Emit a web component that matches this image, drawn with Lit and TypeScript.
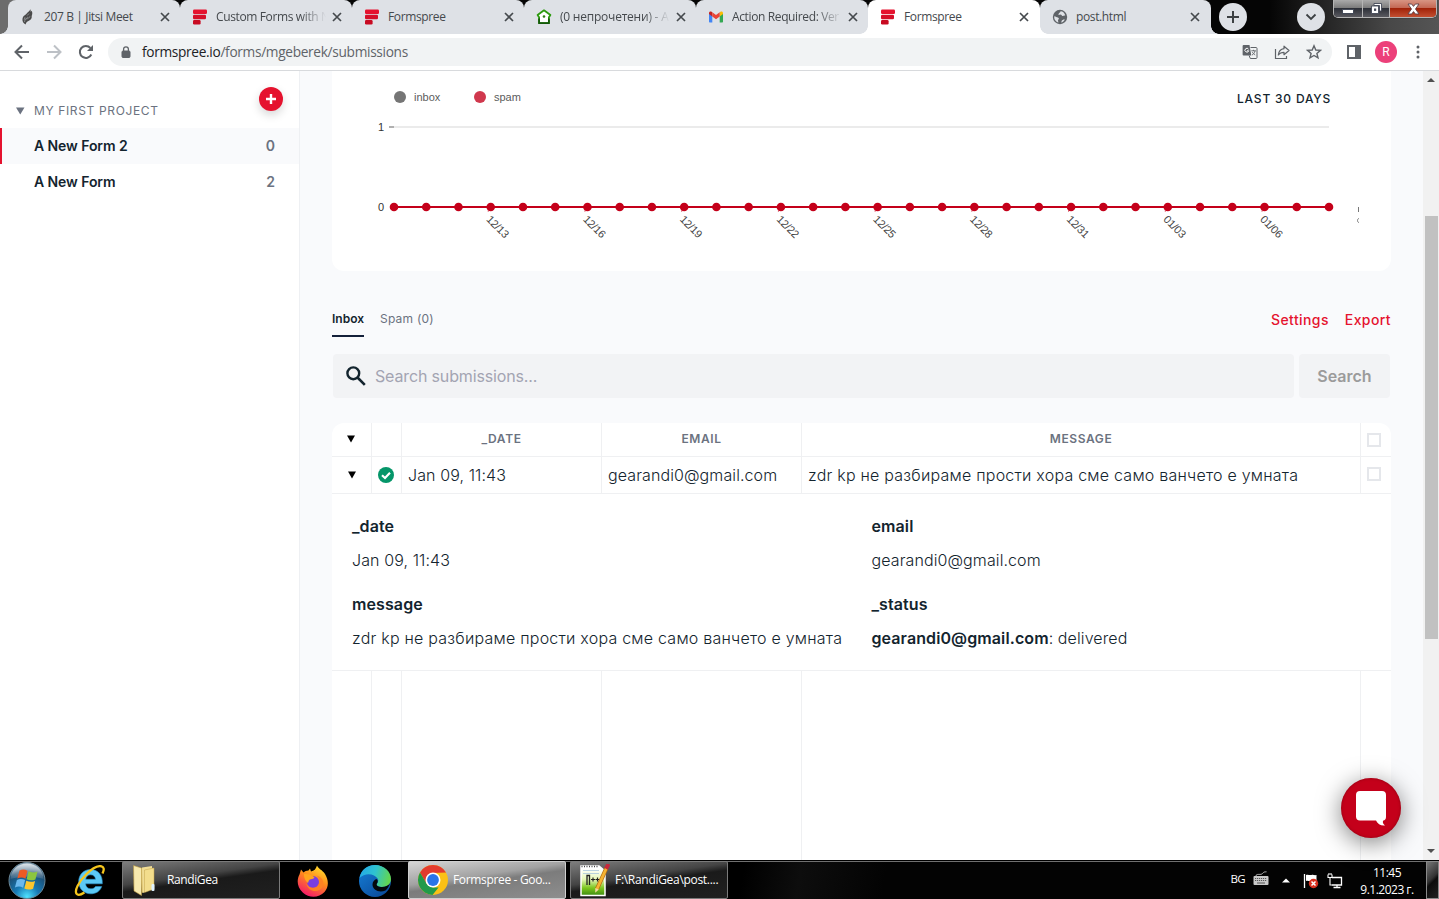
import { LitElement, html, css, svg } from "lit";
import { customElement } from "lit/decorators.js";
import { classMap } from "lit/directives/class-map.js";

const formspreeIcon = html`<svg width="16" height="16" viewBox="0 0 16 16">
  <rect x="1" y="0.5" width="14" height="4.4" rx="1.2" fill="#e5122e" />
  <rect x="1" y="5.8" width="13" height="4.4" rx="1.2" fill="#d50f29" />
  <rect x="1" y="11" width="7.6" height="4.4" rx="1.2" fill="#c80b22" />
</svg>`;

const jitsiIcon = html`<svg width="16" height="16" viewBox="0 0 16 16">
  <path d="M10.200 .3c.6 1 .7 1.700.3 2.500.7-.2 1-.6 1.200-1 1 2.200.6 3.800 0 5.200.5 2.400-1.200 4.300-3.700 5.200-1.400.6-2 1.700-2.400 3.200l-1.400-.9c-1.900-1.600-2.200-4.500-1.200-6.600C3.800 6.200 5.700 6 6.500 4.700c.8-1.400 3.200-2.100 3.700-4.400z" fill="#4a4a4a" />
  <path d="M4.500 13c.3-2.600 1.800-3.800 3.400-5M6.200 10c2-.3 3.200-1.300 3.700-2.700M7.200 6.500l1.800-2M5 8.200l-.8 2.600" stroke="#a5a7ab" stroke-width=".7" fill="none" />
</svg>`;

const houseIcon = html`<svg width="16" height="16" viewBox="0 0 16 16">
  <path d="M8 1.300 14.400 6 12.900 8.200V14.200H3.100V8.200L1.600 6z" fill="#fff" stroke="#2b9a0d" stroke-width="1.800" stroke-linejoin="round" />
  <path d="M3.100 9.500v4.700h9.800V9.500" fill="none" stroke="#15590a" stroke-width="1.800" stroke-linejoin="round" />
  <circle cx="8" cy="7.500" r="1.300" fill="#2d7d12" />
</svg>`;

const gmailIcon = html`<svg width="16" height="16" viewBox="0 0 16 16">
  <path d="M1 4v8.500c0 .6.400 1 1 1h2.300V6.600z" fill="#4285f4" />
  <path d="M15 4v8.500c0 .6-.4 1-1 1h-2.300V6.600z" fill="#34a853" />
  <path d="M11.700 3.600v3.800L15 4.900V4c0-1.500-1.600-2-2.600-1.200z" fill="#fbbc04" />
  <path d="M4.300 3.600v3.800L1 4.900V4c0-1.500 1.600-2 2.600-1.200z" fill="#c5221f" />
  <path d="M4.300 7.400V3.300L8 6.100l3.700-2.800v4.100L8 10.200z" fill="#ea4335" />
</svg>`;

const globeIcon = html`<svg width="16" height="16" viewBox="0 0 16 16">
  <circle cx="8" cy="8" r="7.200" fill="#5f6368" />
  <path d="M2.300 7.200c1.600.3 2.400 1 3.600 1.200 1.300.3 1.200 1.600.4 2.200-.5.500-.2 1.700.2 2.800-2.600-.5-4.700-3.200-4.200-6.200zM8.300 2.200c.6.500-.2 1.200-.9 1.600-.8.500-.5 1.300-1.200 1.600.6.800 1.500.3 2.400.2.900 0 .9 1 1.700 1.300.9.200 1.500-.6 2.900-.4-.3-2.200-2.300-4.400-4.900-4.300zM9.200 13.600c1.500-.3 3-1.500 3.700-3.100-1.400-.4-2.600.300-3.200 1.300z" fill="#dee1e6" />
</svg>`;

interface Tab { title: string; icon: unknown; active?: boolean; fade?: boolean; cls?: string }

const TABS: Tab[] = [
  { title: "207 B | Jitsi Meet", icon: jitsiIcon, cls: "first" },
  { title: "Custom Forms with N", icon: formspreeIcon, fade: true },
  { title: "Formspree", icon: formspreeIcon },
  { title: "(0 непрочетени) - А", icon: houseIcon, fade: true, cls: "cyr" },
  { title: "Action Required: Ver", icon: gmailIcon, fade: true },
  { title: "Formspree", icon: formspreeIcon, active: true },
  { title: "post.html", icon: globeIcon, cls: "last" },
];

@customElement("browser-tabs")
class BrowserTabs extends LitElement {
  static styles = css`
    :host { display: flex; height: 34px; background: linear-gradient(90deg, #6c6c6c 0, #6c6c6c 10px, #050505 60px, #050505 1270px, #1c1c1c 1310px, #484848 1390px, #555 1439px); padding-left: 8px; font-family: "Open Sans", "Noto Sans", sans-serif; font-size: 12px; color: #45494d; }
    .tab { width: 172px; height: 34px; box-sizing: border-box; display: flex; align-items: center; background: #dee1e6; border-radius: 8px 8px 0 0; padding-left: 12px; position: relative; }
    .tab.sep::after { content: ""; position: absolute; right: -1px; top: 7px; width: 1px; height: 20px; background: #85888d; }
    .tab.active { background: #fff; }
    .tab.active::before, .tab.active::after, .tab.first::before, .tab.last::after { content: ""; position: absolute; bottom: 0; width: 8px; height: 8px; z-index: 1; }
    .tab.active::before { left: -8px; background: radial-gradient(circle at 0 0, transparent 7.500px, #fff 8px); }
    .tab.active::after { right: -8px; background: radial-gradient(circle at 100% 0, transparent 7.500px, #fff 8px); }
    .tab.first::before { left: -8px; background: radial-gradient(circle at 0 0, transparent 7.500px, #dee1e6 8px); }
    .tab.last { width: 171px; }
    .tab.last::after { right: -8px; background: radial-gradient(circle at 100% 0, transparent 7.500px, #dee1e6 8px); }
    .icon { display: flex; width: 16px; margin-right: 8px; }
    .title { width: 116px; white-space: nowrap; letter-spacing: -0.37px; line-height: 18px; margin-bottom: 1px; }
    .cyr .title { letter-spacing: -0.22px; }
    .title.fade { -webkit-mask-image: linear-gradient(90deg, #000 84px, transparent 110px); mask-image: linear-gradient(90deg, #000 84px, transparent 110px); }
    .x { display: flex; }
    .active .x { margin-left: -1px; }
    .last .x { margin-left: -2px; }
    .round { width: 28px; height: 28px; border-radius: 50%; background: #dee1e6; margin: 3px 0 0 8px; display: flex; align-items: center; justify-content: center; }
    .round.down { margin-left: 50px; }
    .spring { flex: 1; }
    .controls { display: flex; height: 17px; width: 102px; margin-right: 2px; border: 1px solid #b5b5b5; border-top: 0; border-radius: 0 0 5px 5px; overflow: hidden; box-shadow: 0 0 1px #000; }
    .ctl { width: 28px; display: flex; align-items: center; justify-content: center; border-right: 1px solid #b5b5b5; background: linear-gradient(#aaa 0, #7d7d7d 45%, #2d3038 50%, #5a5a60 100%); }
    .ctl.mid { width: 26px; }
    .ctl.close { flex: 1; border: 0; background: linear-gradient(#d89583 0, #c46955 45%, #a12309 50%, #c34f31 100%); }
    .ctl:first-child svg { margin-top: 4px; }
  `;
  render() {
    return html`${TABS.map((t, i) => html`
      <div class=${classMap({ tab: true, active: !!t.active, sep: i < 4, [t.cls ?? "plain"]: true })}>
        <span class="icon">${t.icon}</span>
        <span class=${classMap({ title: true, fade: !!t.fade })}>${t.title}</span>
        <span class="x"><svg width="10" height="10" viewBox="0 0 10 10"><path d="M1 1l8 8M9 1l-8 8" stroke="#45494d" stroke-width="1.700" /></svg></span>
      </div>`)}
      <div class="round"><svg width="14" height="14" viewBox="0 0 14 14"><path d="M7 1v12M1 7h12" stroke="#3c4043" stroke-width="2" /></svg></div>
      <div class="round down"><svg width="12" height="8" viewBox="0 0 12 8"><path d="M1.500 1.500 6 6l4.500-4.500" fill="none" stroke="#3c4043" stroke-width="1.800" /></svg></div>
      <div class="spring"></div>
      <div class="controls">
        <span class="ctl"><svg width="12" height="6" viewBox="0 0 12 6"><rect x=".5" y="1.500" width="11" height="4" fill="#fff" stroke="#444a58" /></svg></span>
        <span class="ctl mid"><svg width="13" height="13" viewBox="0 0 13 13"><path d="M4 1.500h7.500V9H9.500V3.500H4zM1.500 4h7v7.500h-7z" fill="#fff" stroke="#444a58" stroke-width=".9" /><rect x="4" y="6.500" width="2.200" height="2.400" fill="#444a58" /></svg></span>
        <span class="ctl close"><svg width="13" height="12" viewBox="0 0 13 12"><path d="M1 1h3.600l1.900 2.400L8.400 1H12L8.500 6 12 11H8.400L6.500 8.600 4.600 11H1l3.500-5z" fill="#fff" stroke="#5a4248" stroke-width=".9" /></svg></span>
      </div>`;
  }
}

@customElement("browser-toolbar")
class BrowserToolbar extends LitElement {
  static styles = css`
    :host { display: flex; align-items: center; height: 36px; background: #fff; border-bottom: 1px solid #d8dadd; padding-left: 14px; box-sizing: content-box; font-family: "Open Sans", "Noto Sans", sans-serif; }
    svg { display: block; flex: none; }
    .nav { display: flex; gap: 16px; }
    .omni { display: flex; align-items: center; width: 1224px; height: 28px; box-sizing: border-box; border-radius: 14px; background: #f1f3f4; margin-left: 14px; padding: 0 10px 0 13px; }
    .url { flex: 1; margin-left: 11px; font-size: 13.700px; letter-spacing: -0.32px; color: #5f6368; white-space: nowrap; line-height: 20px; }
    .host { color: #202124; }
    .acts { display: flex; gap: 16px; align-items: center; }
    .right { display: flex; align-items: center; margin-left: 14px; }
    .avatar { width: 22px; height: 22px; border-radius: 50%; background: #ec407a; color: #fff; font: 12px/22px Roboto, sans-serif; text-align: center; margin: 0 19px 0 13px; }
  `;
  render() {
    return html`
      <div class="nav">
        <svg width="16" height="16" viewBox="0 0 16 16"><path d="M15 8H2.500M8 1.500 1.500 8 8 14.500" fill="none" stroke="#5f6368" stroke-width="2" /></svg>
        <svg width="16" height="16" viewBox="0 0 16 16"><path d="M1 8h12.500M8 1.500 14.500 8 8 14.500" fill="none" stroke="#bdc1c6" stroke-width="2" /></svg>
        <svg width="16" height="16" viewBox="0 0 16 16"><path d="M13.300 10.500A6 6 0 1 1 12.400 4" fill="none" stroke="#5f6368" stroke-width="2" /><path d="M15 1v6H9z" fill="#5f6368" /></svg>
      </div>
      <div class="omni">
        <svg width="10" height="13" viewBox="0 0 10 13"><rect x="1" y="5" width="8" height="6.500" rx="1" fill="#5f6368" stroke="#5f6368" /><path d="M2.600 5V3.200a2.400 2.400 0 0 1 4.800 0V5" fill="none" stroke="#5f6368" stroke-width="1.300" /></svg>
        <div class="url"><span class="host">formspree.io</span>/forms/mgeberek/submissions</div>
        <div class="acts">
          <svg width="16" height="16" viewBox="0 0 16 16"><path d="M1.500 1h6l1.800 10.500H1.500c-.5 0-.9-.4-.9-.9V1.900c0-.5.400-.9.900-.9z" fill="#5f6368" /><path d="M8.500 3.500h5.600c.5 0 .9.400.9.900v9.200c0 .5-.4.900-.9.900H8.300l-1.200-3" fill="none" stroke="#5f6368" /><path d="M6.500 5.200A1.900 1.900 0 1 0 6.700 6.800H5" fill="none" stroke="#fff" /><path d="M9.300 6.800h4.600M11.500 5.800v1M13 7c-.4 2-1.700 3.400-3 4M10.400 8c.4 1.200 1.500 2.300 2.800 3" fill="none" stroke="#5f6368" stroke-width=".9" /></svg>
          <svg width="16" height="16" viewBox="0 0 16 16"><path d="M1.500 5v9.500h11V12" fill="none" stroke="#5f6368" stroke-width="1.200" /><path d="M10 2.200 15 6.500l-5 4.200V8.300c-2.600 0-4.300.7-5.700 2.700.4-3.200 2.100-5.800 5.700-6.300z" fill="none" stroke="#5f6368" stroke-width="1.200" stroke-linejoin="round" /></svg>
          <svg width="16" height="16" viewBox="0 0 16 16"><path d="M8 1.800 9.800 6l4.600.4-3.500 3 1.100 4.500L8 11.500l-4 2.400 1.100-4.500-3.500-3L6.200 6z" fill="none" stroke="#5f6368" stroke-width="1.400" /></svg>
        </div>
      </div>
      <div class="right">
        <svg width="16" height="16" viewBox="0 0 16 16"><path d="M1 1h14v14H1z" fill="#5f6368" /><path d="M3 3h6v10H3z" fill="#fff" /></svg>
        <div class="avatar">R</div>
        <svg width="4" height="14" viewBox="0 0 4 14"><circle cx="2" cy="2" r="1.500" fill="#5f6368" /><circle cx="2" cy="7" r="1.500" fill="#5f6368" /><circle cx="2" cy="12" r="1.500" fill="#5f6368" /></svg>
      </div>`;
  }
}

@customElement("project-sidebar")
class ProjectSidebar extends LitElement {
  static styles = css`
    :host { display: block; width: 299px; flex: none; background: #fff; border-right: 1px solid #eef0f3; font-family: Inter, sans-serif; }
    .head { display: flex; height: 57px; box-sizing: border-box; padding: 16px 16px 0 16px; }
    .tri { margin: 20px 9px 0 0; width: 9px; height: 8px; }
    .name { flex: 1; font-size: 12px; letter-spacing: 0.64px; line-height: 16px; color: #6b7280; margin-top: 16px; }
    .add { width: 24px; height: 24px; border-radius: 50%; background: #e5122e; display: flex; align-items: center; justify-content: center; box-shadow: 0 4px 10px rgba(0, 0, 0, .16); }
    .item { display: flex; justify-content: space-between; align-items: center; height: 36px; box-sizing: border-box; padding: 0 24px 1px 32px; border-left: 2px solid transparent; font-size: 14px; font-weight: 600; letter-spacing: -0.08px; color: #13242e; }
    .item.on { background: #f9fafc; border-color: #e5122e; }
    .n { color: #6b7280; }
  `;
  render() {
    return html`
      <div class="head">
        <svg class="tri" viewBox="0 0 9 8"><path d="M0 0.500h8.500L4.250 7.500z" fill="#6b7280" /></svg>
        <span class="name">MY FIRST PROJECT</span>
        <span class="add"><svg width="10" height="10" viewBox="0 0 10 10"><path d="M5 0v10M0 5h10" stroke="#fff" stroke-width="2.400" /></svg></span>
      </div>
      <div class="item on"><span>A New Form 2</span><span class="n">0</span></div>
      <div class="item"><span>A New Form</span><span class="n">2</span></div>`;
  }
}

const X0 = 62, X1 = 997, STEP = (X1 - X0) / 29;
const DATES = ["12/13", "12/16", "12/19", "12/22", "12/25", "12/28", "12/31", "01/03", "01/06"];

@customElement("submissions-chart")
class SubmissionsChart extends LitElement {
  static styles = css`
    :host { display: block; height: 200px; background: #fff; border-radius: 0 0 12px 12px; flex: none; }
    svg { display: block; }
    .lab { font: 11px "Liberation Sans", sans-serif; fill: #5c5c5c; }
    .day { letter-spacing: -0.25px; fill: #444; }
    .ax { font: 11px "Liberation Sans", sans-serif; fill: #333; }
    .range { font: 500 12px Inter, sans-serif; letter-spacing: 0.8px; fill: #13242e; }
  `;
  render() {
    const pts = Array.from({ length: 30 }, (_, i) => X0 + i * STEP);
    return html`<svg width="1059" height="199" viewBox="0 0 1059 199">
      <circle cx="68" cy="26" r="6" fill="#757575" /><text class="lab" x="82" y="30">inbox</text>
      <circle cx="148" cy="26" r="6" fill="#d0384d" /><text class="lab" x="162" y="30">spam</text>
      <text class="range" x="905" y="32">LAST 30 DAYS</text>
      <text class="ax" x="46" y="60">1</text><text class="ax" x="46" y="140">0</text>
      <path d="M62 56H997" stroke="#ebebeb" stroke-width="2" /><path d="M57 56h5" stroke="#b0b0b0" stroke-width="2" />
      <path d="M62 136H997" stroke="#c4001a" stroke-width="2" />
      ${pts.map((x) => svg`<circle cx=${x} cy="136" r="4.300" fill="#c4001a" />`)}
      ${DATES.map((d, i) => {
        const x = X0 + (i + 1) * 3 * STEP;
        return svg`<path d="M${x - 2.5} 136v5" stroke="#c4001a" stroke-width="1" opacity=".5" /><text class="lab day" transform="translate(${x - 5} 149) rotate(45)">${d}</text>`;
      })}
      <path d="M1026.500 136v5" stroke="#777" /><path d="M1027 147.500c-2 0-2 4 0 4" stroke="#777" fill="none" />
    </svg>`;
  }
}

@customElement("submissions-table")
class SubmissionsTable extends LitElement {
  static styles = css`
    :host { display: flex; flex-direction: column; flex: 1; background: #fff; border-radius: 12px 12px 0 0; font-family: Inter, sans-serif; color: #13242e; overflow: hidden; }
    .row { display: grid; grid-template-columns: 40px 30px 200px 200px 559px 30px; }
    .row > * { border-right: 1px solid #eff0f2; display: flex; align-items: center; min-width: 0; box-sizing: border-box; white-space: nowrap; }
    .row > :last-child { border-right: 0; padding-left: 6px; }
    .th { height: 33px; border-bottom: 1px solid #eff0f2; }
    .th > * { justify-content: center; font-size: 12px; font-weight: 600; letter-spacing: 0.6px; color: #6b7280; padding-bottom: 2px; }
    .th > :last-child { justify-content: flex-start; padding-bottom: 0; }
    .th > :first-child { padding-bottom: 2px; padding-right: 1px; }
    .td { height: 36px; border-bottom: 1px solid #eff0f2; }
    .td > .t { padding-left: 6px; font-size: 16px; font-weight: 300; letter-spacing: 0.1px; }
    .td > .t.msg, .v.msg { letter-spacing: 0.23px; }
    .td > .c { justify-content: center; }
    .td > .ok { padding-right: 1px; }
    .box { width: 14px; height: 14px; box-sizing: border-box; border: 2px solid #e5e7eb; }
    .th .box { margin-top: 0; }
    .td .box { margin-bottom: 2px; }
    .detail { height: 177px; box-sizing: border-box; border-bottom: 1px solid #eff0f2; padding: 20px 20px 0; display: grid; grid-template-columns: 519.500px 1fr; grid-auto-rows: 78px; font-size: 16px; line-height: 24px; letter-spacing: 0.1px; }
    .k { font-weight: 600; }
    .v { font-weight: 300; margin-top: 10px; white-space: nowrap; }
    b { font-weight: 600; }
    .empty { flex: 1; }
    svg { display: block; }
  `;
  render() {
    const tri = html`<svg width="8" height="8" viewBox="0 0 8 8"><path d="M0 0.500h8L4 7.500z" fill="#000" /></svg>`;
    const msg = "zdr kp не разбираме прости хора сме само ванчето е умната";
    return html`
      <div class="row th"><span>${tri}</span><span></span><span>_DATE</span><span>EMAIL</span><span>MESSAGE</span><span><i class="box"></i></span></div>
      <div class="row td">
        <span class="c">${tri}</span>
        <span class="c ok"><svg width="16" height="16" viewBox="0 0 16 16"><circle cx="8" cy="8" r="8" fill="#059669" /><path d="M4 8.200 7 11l5-5.200" fill="none" stroke="#fff" stroke-width="2.200" /></svg></span>
        <span class="t">Jan 09, 11:43</span><span class="t">gearandi0@gmail.com</span><span class="t msg">${msg}</span><span><i class="box"></i></span>
      </div>
      <div class="detail">
        <div><div class="k">_date</div><div class="v">Jan 09, 11:43</div></div>
        <div><div class="k">email</div><div class="v">gearandi0@gmail.com</div></div>
        <div><div class="k">message</div><div class="v msg">${msg}</div></div>
        <div><div class="k">_status</div><div class="v"><b>gearandi0@gmail.com</b>: delivered</div></div>
      </div>
      <div class="row empty"><span></span><span></span><span></span><span></span><span></span><span></span></div>`;
  }
}

@customElement("form-page")
class FormPage extends LitElement {
  static styles = css`
    :host { display: flex; flex-direction: column; flex: 1; min-width: 0; min-height: 0; background: #f9fafc; padding: 0 32px; font-family: Inter, sans-serif; overflow: hidden; }
    .tabs { display: flex; height: 26px; margin-top: 40px; font-size: 12px; line-height: 16px; }
    .tab { color: #6b7280; letter-spacing: 0.22px; margin-left: 16px; }
    .tab.on { margin-left: 0; width: 32px; letter-spacing: 0; font-weight: 600; color: #13242e; box-sizing: border-box; border-bottom: 2px solid #14213a; }
    .links { margin-left: auto; display: flex; gap: 16px; font-size: 14px; font-weight: 500; letter-spacing: 0.4px; color: #e5122e; line-height: 18px; }
    .search { display: flex; gap: 5px; margin: 17px 1px 25px 1px; height: 44px; }
    .field { flex: 1; display: flex; align-items: center; background: #f2f3f5; border-radius: 4px; padding-left: 13px; gap: 9px; font-size: 16px; letter-spacing: -0.15px; color: #a3a4b2; }
    .btn { width: 91px; background: #f2f3f5; border-radius: 4px; display: flex; align-items: center; justify-content: center; font-size: 16px; font-weight: 600; color: #9b9b9b; }
  `;
  render() {
    return html`
      <submissions-chart></submissions-chart>
      <div class="tabs"><span class="tab on">Inbox</span><span class="tab">Spam (0)</span>
        <div class="links"><span>Settings</span><span>Export</span></div></div>
      <div class="search">
        <div class="field"><svg width="20" height="20" viewBox="0 0 20 20"><circle cx="7.300" cy="7.300" r="5.900" fill="none" stroke="#13242e" stroke-width="2.400" /><path d="M11.500 11.500l7.300 7.300" stroke="#13242e" stroke-width="2.600" /></svg><span>Search submissions...</span></div>
        <div class="btn">Search</div>
      </div>
      <submissions-table></submissions-table>`;
  }
}

@customElement("win-taskbar")
class WinTaskbar extends LitElement {
  static styles = css`
    :host { display: flex; height: 39px; box-sizing: border-box; border-top: 1px solid #000; background: #060606; font-family: "Open Sans", "Noto Sans", sans-serif; font-size: 12px; color: #fff; }
    .bar { flex: 1; display: flex; align-items: center; border-top: 1px solid #707070; background: linear-gradient(100deg, #000 0, #000 52%, #0d0d0d 56%, #030303 62%, #030303 100%); }
    svg { display: block; flex: none; }
    .start { margin-left: 8px; }
    .ie { margin-left: 28px; }
    .task { height: 38px; margin-top: -1px; width: 158px; box-sizing: border-box; border: 1px solid #7a7a7a; border-radius: 2px; display: flex; align-items: center; padding-left: 10px; white-space: nowrap; letter-spacing: -0.4px; background: linear-gradient(172deg, #7d7d7d 0, #444 40%, #1a1a1a 52%, #202020 100%); }
    .task span { margin-bottom: 1px; }
    .folder { margin-left: 16px; }
    .folder span { margin-left: 11px; }
    .ff { margin-left: 17px; }
    .edge { margin-left: 29px; }
    .chrome { margin-left: 16px; border-color: #cfcfcf; padding-left: 8px; letter-spacing: -0.34px; background: linear-gradient(172deg, #d5d5d5 0, #a2a2a2 40%, #7c7c7c 52%, #8e8e8e 100%); }
    .chrome span { margin-left: 4px; }
    .npp { margin-left: 4px; padding-left: 9px; letter-spacing: -0.3px; }
    .npp span { margin-left: 5px; }
    .tray { margin-left: auto; display: flex; align-items: center; }
    .lang { font-size: 11.500px; letter-spacing: -0.6px; margin: 0 8px 5px 0; }
    .kb { margin: 0 13px 5px 0; }
    .up { margin-right: 13px; }
    .flag { margin-right: 8px; }
    .clock { width: 64px; margin: 0 7px 0 12px; text-align: center; line-height: 17px; font-size: 12px; letter-spacing: -0.5px; white-space: nowrap; }
    .peek { width: 13px; box-sizing: border-box; border: 1px solid #8a8a8a; background: linear-gradient(135deg, #777 0, #333 45%, #0c0c0c 55%, #222 100%); }
  `;
  render() {
    return html`
      <div class="bar">
        <svg class="start" width="38" height="37" viewBox="0 0 38 37">
          <defs>
            <radialGradient id="orb" cx=".5" cy=".95" r=".95"><stop offset="0" stop-color="#4fe3ff" /><stop offset=".35" stop-color="#1779b5" /><stop offset=".75" stop-color="#1d4a6e" /><stop offset="1" stop-color="#8ba5b8" /></radialGradient>
            <linearGradient id="gl" x1="0" y1="0" x2="0" y2="1"><stop offset="0" stop-color="#fff" stop-opacity=".75" /><stop offset="1" stop-color="#fff" stop-opacity=".1" /></linearGradient>
          </defs>
          <circle cx="19" cy="18.500" r="18" fill="url(#orb)" stroke="#6a8797" />
          <path d="M2.500 17a16.500 15.500 0 0 1 33 0c-10-3-22-3-33 0z" fill="url(#gl)" />
          <path d="M11.500 8.500c3-1.500 5.500-1.200 8 .2l-2 8c-2.500-1.400-5.500-1.500-8.200-.2z" fill="#ee5a24" />
          <path d="M20.600 9.300c2.900 1.400 5.700 1.500 8.900.1l-2.100 8c-3.100 1.300-6 1.100-8.800-.1z" fill="#8cc63f" />
          <path d="M8.900 17.900c2.700-1.300 5.700-1.200 8.200.2l-2 7.600c-2.400-1.400-5.400-1.400-8.200-.2z" fill="#6bb8ee" />
          <path d="M18.300 18.700c2.800 1.300 5.800 1.400 8.800.2l-2 7.800c-3.100 1.300-6 1.200-8.800-.2z" fill="#fdc62e" />
        </svg>
        <svg class="ie" width="32" height="32" viewBox="0 0 32 32">
          <path d="M16.500 4.500c-6.800 0-11.800 5-11.800 12s4.800 12.300 12 12.300c5.400 0 9.400-2.600 11-7.300h-6.200c-1 1.600-2.600 2.300-4.600 2.300-3 0-5.100-1.800-5.300-5h16.700c.6-8.400-4.200-14.300-11.800-14.300zm-4.800 9.800c.4-2.800 2.200-4.500 4.900-4.500 2.800 0 4.600 1.700 4.900 4.500z" fill="#5cc8f5" stroke="#2a93cf" stroke-width=".6" />
          <path d="M28.500 8.500c2-4 1.500-6.500-1-7.200-3.500-.8-9.500 2.200-15 7.700C4.500 17 .2 25.500 2.600 28.800c1.400 1.800 4.600.8 7.800-1.300" fill="none" stroke="#f5c51c" stroke-width="2.300" />
        </svg>
        <div class="task folder">
          <svg width="23" height="32" viewBox="0 0 23 32"><path d="M7 4h13.500v19L9 29z" fill="#dfc46f" /><path d="M9 3.500 19 2v22l-9 5z" fill="#f0dc94" /><path d="M0.500 1.500 8.500 4v27.500L1 27z" fill="#f7e9ae" stroke="#b8973e" stroke-width=".6" /><path d="M11.500 6 21 4v21l-9.500 3.500z" fill="#f3dd8c" stroke="#c2a24a" stroke-width=".5" /><rect x="18.500" y="20" width="3" height="7" rx="1" fill="#dff2ff" /></svg>
          <span>RandiGea</span>
        </div>
        <svg class="ff" width="32" height="32" viewBox="0 0 32 32">
          <defs><linearGradient id="fx" x1=".8" y1="0" x2=".3" y2="1"><stop offset="0" stop-color="#ffe52e" /><stop offset=".45" stop-color="#ff8a1c" /><stop offset="1" stop-color="#f5156c" /></linearGradient></defs>
          <path d="M20 .5c1 3 5.500 4.500 8 8.500 4.200 7 3.500 13.500-.5 18-5.500 6-15.500 6.200-21.500.8C-.5 22-.2 14.500 2.500 9.500L4 4.500l2.500 3c1-1.200 3-2 5-2l1.500-2 1 3C17 6 19 4 20 .5z" fill="url(#fx)" />
          <circle cx="16" cy="17" r="6" fill="#7a3ee0" /><path d="M7 9c5-.5 8 1 10.500 3.500-1 1.500-3.500 1.500-5 2.200-1 1-1 2-1.500 3.300-1.500-1-4.500-5-4-9z" fill="#ffa51c" /><path d="M9 18c2 4.500 7 6 11 3.500 4-3 3-9-1-11 6 1 9 6.500 6.500 11.500-3.500 6-14 6-16.500-4z" fill="#ff8222" />
        </svg>
        <svg class="edge" width="34" height="34" viewBox="0 0 34 34">
          <defs><linearGradient id="e1" x1="0" y1=".2" x2="1" y2=".4"><stop offset="0" stop-color="#23a9e8" /><stop offset=".5" stop-color="#2fc3d0" /><stop offset="1" stop-color="#62d64f" /></linearGradient><linearGradient id="e2" x1="0" y1="0" x2=".8" y2="1"><stop offset="0" stop-color="#1580d8" /><stop offset="1" stop-color="#0b4a9a" /></linearGradient></defs>
          <circle cx="17" cy="17" r="16" fill="url(#e2)" />
          <path d="M1.500 14C3 6 9 1 17 1c9 0 16 6.500 16 14 0 5-4 8-9 8-4.500 0-6-1.800-5-3.200 1.500-2 1.500-3.500.8-5C16.500 9 6.500 8.500 1.500 14z" fill="url(#e1)" />
          <path d="M19 19.500c-1.200 1.600.5 3.500 5 3.500 3.500 0 6-1.500 8-3.500-1 2.500-2.300 5-4.500 7-6.500 2.500-13-.5-13-6 0-2.500 1.500-4.500 3.700-5.500 1.800.5 2 2.800.8 4.500z" fill="#04070c" />
        </svg>
        <div class="task chrome">
          <svg width="32" height="32" viewBox="0 0 32 32">
            <circle cx="16" cy="16" r="15" fill="#fbc116" /><path d="M3 8.500A15 15 0 0 1 29 8.500L16 9 9.500 19.700z" fill="#e33b2e" /><path d="M3 8.500 9.800 20 16 23.500h5.500L15.500 31A15 15 0 0 1 3 8.500z" fill="#229a4a" />
            <circle cx="16" cy="16" r="7.500" fill="#fff" /><circle cx="16" cy="16" r="5.900" fill="#2a74e8" />
          </svg><span>Formspree - Goo...</span>
        </div>
        <div class="task npp">
          <svg width="30" height="33" viewBox="0 0 30 33">
            <defs><linearGradient id="np" x1="0" y1="0" x2="0" y2="1"><stop offset=".1" stop-color="#fff" /><stop offset=".45" stop-color="#e6f6b8" /><stop offset=".75" stop-color="#7ac51c" /><stop offset="1" stop-color="#3c8a12" /></linearGradient></defs>
            <path d="M1 2h18l6 5v24.500H1z" fill="url(#np)" stroke="#fff" stroke-width="1.500" />
            <path d="M1.500 2.500h17" stroke="#444" stroke-width="1.500" stroke-dasharray="1 1.500" /><path d="M3 6.500h16M3 9.500h16" stroke="#a9c6dc" stroke-width=".8" />
            <path d="M7 21v-9.500h2.500V21" fill="none" stroke="#222" stroke-width="1.300" /><path d="M11 15.500h4M13 13.500v4M15.500 15.500h4M17.500 13.500v4" stroke="#222" stroke-width="1.200" />
            <path d="M26.500 4 17 25" stroke="#b56a10" stroke-width="4.200" /><path d="M26.500 4 17 25" stroke="#f5b432" stroke-width="2.800" /><path d="M28.600 0 26 4.700" stroke="#c8283c" stroke-width="4" /><path d="M15.300 24l3.500 1.600-3.600 3.200z" fill="#f0d8a0" />
          </svg><span>F:\\RandiGea\\post....</span>
        </div>
        <div class="tray">
          <span class="lang">BG</span>
          <svg class="kb" width="16" height="15" viewBox="0 0 16 15"><rect x=".5" y="5" width="15" height="9" rx="1" fill="#c9c9c9" /><path d="M2 7.500h12M2 9.500h12" stroke="#555" stroke-dasharray="1.200 .8" /><path d="M4 12h8" stroke="#555" /><path d="M3 5C3 2 8 4.500 9.500 2.500S12 1 13.500.8" fill="none" stroke="#bbb" /></svg>
          <svg class="up" width="8" height="5" viewBox="0 0 8 5"><path d="M0 4.500 4 .5l4 4z" fill="#fff" /></svg>
          <svg class="flag" width="16" height="16" viewBox="0 0 16 16"><path d="M1.500 1v14" stroke="#fff" stroke-width="1.300" /><path d="M3 2c2-1 3.500.5 5.500 0s3 .5 5 0v6c-2 .5-3-.5-5 0S5 7.500 3 8z" fill="#fff" /><circle cx="10.500" cy="10.500" r="4.700" fill="#d9301f" /><path d="M8.500 8.500l4 4M12.500 8.500l-4 4" stroke="#fff" stroke-width="1.500" /></svg>
          <svg width="16" height="16" viewBox="0 0 16 16"><path d="M5 4.500h9.500V12H5" fill="none" stroke="#fff" stroke-width="1.300" /><path d="M10 12v2M6.500 14.500h7" stroke="#fff" stroke-width="1.300" /><path d="M1 1.500v3h4v-3M3 4.500V12h2M2 0v2M4 0v2" fill="none" stroke="#fff" stroke-width="1.100" /></svg>
          <div class="clock">11:45<br />9.1.2023 г.</div>
        </div>
      </div>
      <div class="peek"></div>`;
  }
}

@customElement("app-root")
class AppRoot extends LitElement {
  static styles = css`
    :host { display: flex; flex-direction: column; width: 1439px; height: 899px; overflow: hidden; position: relative; background: #fff; }
    .view { flex: 1; display: flex; min-height: 0; }
    .scroll { width: 16px; background: #f1f1f1; display: flex; flex-direction: column; align-items: center; }
    .scroll svg { display: block; margin-top: 7px; }
    .thumb { width: 13px; margin: 134px 0 0 1px; height: 423px; background: #c1c1c1; }
    .scroll .dn { margin-top: auto; margin-bottom: 7px; }
    .chat { position: absolute; left: 1341px; top: 778px; width: 60px; height: 60px; border-radius: 50%; background: #c4001a; box-shadow: 0 5px 24px rgba(0, 0, 0, .5), inset 0 0 3px rgba(90, 0, 10, .5); display: flex; align-items: center; justify-content: center; }
  `;
  render() {
    return html`
      <browser-tabs></browser-tabs>
      <browser-toolbar></browser-toolbar>
      <div class="view">
        <project-sidebar></project-sidebar>
        <form-page></form-page>
        <div class="scroll">
          <svg width="8" height="4" viewBox="0 0 8 4"><path d="M0 4 4 0l4 4z" fill="#505050" /></svg>
          <div class="thumb"></div>
          <svg class="dn" width="8" height="4" viewBox="0 0 8 4"><path d="M0 0l4 4 4-4z" fill="#505050" /></svg>
        </div>
      </div>
      <win-taskbar></win-taskbar>
      <div class="chat"><svg width="32" height="36" viewBox="0 0 32 36"><path d="M5 1h22a4 4 0 0 1 4 4v22a4 4 0 0 1-3 3.800c-.6 2 .5 3.700 2 4.700-4 .5-7.500-1.500-9-5H5a4 4 0 0 1-4-4V5a4 4 0 0 1 4-4z" fill="#fff" /></svg></div>`;
  }
}
